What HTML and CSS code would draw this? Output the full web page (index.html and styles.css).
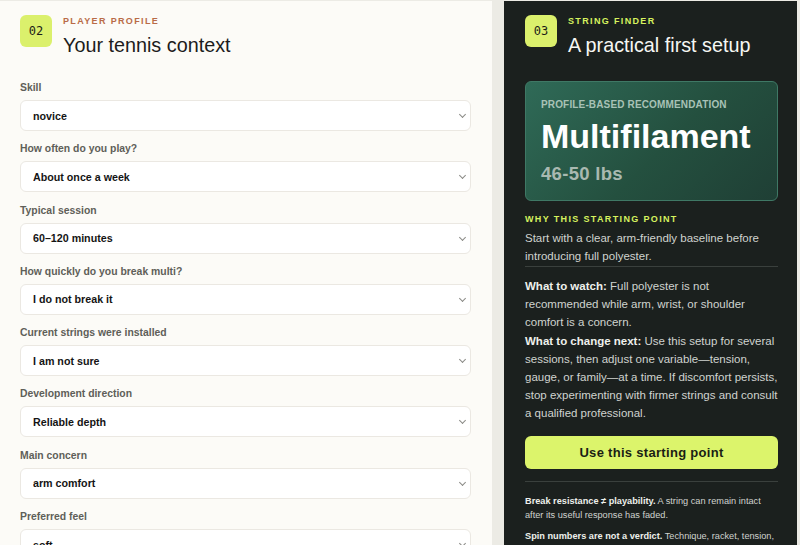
FILE: index.html
```html
<!DOCTYPE html>
<html lang="en">
<head>
    <meta charset="UTF-8">
    <meta name="viewport" content="width=device-width, initial-scale=1.0">
    <title>String Finder</title>
    <link rel="stylesheet" href="styles.css">
</head>
<body>

    <div class="layout">

        <!-- Player profile -->
        <section class="panel profile">
            <div class="step-head">
                <div class="step-num">02</div>
                <div>
                    <p class="eyebrow">Player profile</p>
                    <h2>Your tennis context</h2>
                </div>
            </div>

            <form class="profile-form">
                <div class="field">
                    <label for="skill">Skill</label>
                    <div class="select-wrap">
                        <select id="skill">
                            <option>novice</option>
                            <option>intermediate</option>
                            <option>advanced</option>
                        </select>
                    </div>
                </div>
                <div class="field">
                    <label for="often">How often do you play?</label>
                    <div class="select-wrap">
                        <select id="often">
                            <option>About once a week</option>
                            <option>2–3 times a week</option>
                        </select>
                    </div>
                </div>
                <div class="field">
                    <label for="session">Typical session</label>
                    <div class="select-wrap">
                        <select id="session">
                            <option>60–120 minutes</option>
                        </select>
                    </div>
                </div>
                <div class="field">
                    <label for="break">How quickly do you break multi?</label>
                    <div class="select-wrap">
                        <select id="break">
                            <option>I do not break it</option>
                        </select>
                    </div>
                </div>
                <div class="field">
                    <label for="installed">Current strings were installed</label>
                    <div class="select-wrap">
                        <select id="installed">
                            <option>I am not sure</option>
                        </select>
                    </div>
                </div>
                <div class="field">
                    <label for="direction">Development direction</label>
                    <div class="select-wrap">
                        <select id="direction">
                            <option>Reliable depth</option>
                        </select>
                    </div>
                </div>
                <div class="field">
                    <label for="concern">Main concern</label>
                    <div class="select-wrap">
                        <select id="concern">
                            <option>arm comfort</option>
                        </select>
                    </div>
                </div>
                <div class="field">
                    <label for="feel">Preferred feel</label>
                    <div class="select-wrap">
                        <select id="feel">
                            <option>soft</option>
                        </select>
                    </div>
                </div>
            </form>
        </section>

        <!-- String finder result -->
        <section class="panel finder">
            <div class="step-head">
                <div class="step-num">03</div>
                <div>
                    <p class="eyebrow">String finder</p>
                    <h2>A practical first setup</h2>
                </div>
            </div>

            <div class="rec-card">
                <p class="rec-label">Profile-based recommendation</p>
                <p class="rec-type">Multifilament</p>
                <p class="rec-tension">46-50 lbs</p>
            </div>

            <p class="eyebrow why">Why this starting point</p>
            <p class="why-text">Start with a clear, arm-friendly baseline before introducing full polyester.</p>

            <div class="advice">
                <p><strong>What to watch:</strong> Full polyester is not recommended while arm, wrist, or shoulder comfort is a concern.</p>
                <p><strong>What to change next:</strong> Use this setup for several sessions, then adjust one variable—tension, gauge, or family—at a time. If discomfort persists, stop experimenting with firmer strings and consult a qualified professional.</p>
            </div>

            <button type="button" class="use-btn">Use this starting point</button>

            <div class="notes">
                <p><strong>Break resistance ≠ playability.</strong> A string can remain intact after its useful response has faded.</p>
                <p><strong>Spin numbers are not a verdict.</strong> Technique, racket, tension, and string age all change what you feel.</p>
            </div>
        </section>

    </div>

</body>
</html>
```

FILE: styles.css
```css
/* Basic reset */
* {
    margin: 0;
    padding: 0;
    box-sizing: border-box;
}

body {
    font-family: "Liberation Sans", Arial, sans-serif;
    background-color: #ecebe5;
    overflow: hidden;
}

.layout {
    display: grid;
    grid-template-columns: 492px 293px;
    column-gap: 12px;
    padding-top: 1px;
    align-items: start;
}

.panel {
    min-height: 700px;
    padding-top: 14px;
}

.profile {
    background-color: #fcfbf7;
    padding-left: 20px;
    padding-right: 21px;
}

.finder {
    background-color: #1b201e;
    padding-left: 21px;
    padding-right: 19px;
    color: #d0d3cf;
}

/* Step header */
.step-head {
    display: flex;
    align-items: flex-start;
    gap: 11px;
}

.step-num {
    width: 32px;
    height: 32px;
    flex-shrink: 0;
    border-radius: 6px;
    background-color: #dbf06c;
    color: #1b1d18;
    font-family: "DejaVu Sans Mono", "Liberation Mono", monospace;
    font-size: 12px;
    display: flex;
    align-items: center;
    justify-content: center;
}

.eyebrow {
    font-size: 9px;
    line-height: 12px;
    font-weight: bold;
    letter-spacing: 1.35px;
    text-transform: uppercase;
    color: #b96b47;
}

.finder .eyebrow {
    color: #d6f25f;
}

.step-head h2 {
    margin-top: 6px;
    font-size: 19.8px;
    line-height: 24px;
    font-weight: normal;
    color: #1c1c1c;
}

.finder .step-head h2 {
    color: #f6f7f3;
}

/* Profile form */
.profile-form {
    padding-top: 24px;
}

.field {
    margin-bottom: 11.3px;
}

.field label {
    display: block;
    font-size: 10.4px;
    line-height: 13px;
    font-weight: bold;
    color: #5f5f59;
    margin-bottom: 6px;
}

.select-wrap {
    position: relative;
}

.select-wrap::after {
    content: "";
    position: absolute;
    right: 6px;
    top: 12px;
    width: 4px;
    height: 4px;
    border-right: 1px solid #8a8a86;
    border-bottom: 1px solid #8a8a86;
    transform: rotate(45deg);
    pointer-events: none;
}

.select-wrap select {
    appearance: none;
    -webkit-appearance: none;
    width: 100%;
    height: 31px;
    padding: 0 24px 0 12px;
    font-family: inherit;
    font-size: 10.7px;
    font-weight: bold;
    color: #141414;
    background-color: #ffffff;
    border: 1px solid #ebe8e2;
    border-radius: 6px;
    outline: none;
}

/* Recommendation card */
.rec-card {
    margin-top: 24px;
    height: 120px;
    padding: 17px 15px 0;
    border: 1px solid #3f7865;
    border-radius: 6px;
    background: linear-gradient(135deg, #2f6a57 0%, #24503f 55%, #1f3f35 100%);
}

.rec-label {
    font-size: 10px;
    line-height: 12px;
    font-weight: bold;
    letter-spacing: 0.15px;
    text-transform: uppercase;
    color: #a8c2b6;
}

.rec-type {
    margin-top: 6px;
    font-size: 34px;
    line-height: 38px;
    font-weight: bold;
    color: #ffffff;
}

.rec-tension {
    margin-top: 8px;
    font-size: 18.5px;
    line-height: 22px;
    font-weight: bold;
    letter-spacing: 0.3px;
    color: #a9b9b1;
}

/* Reasoning */
.why {
    margin-top: 12px;
}

.why-text {
    margin-top: 4px;
    padding-bottom: 1px;
    font-size: 11.5px;
    line-height: 18px;
    border-bottom: 1px solid #3a403d;
}

.advice {
    margin-top: 10px;
    font-size: 11.5px;
    line-height: 18.2px;
}

.advice strong,
.notes strong {
    color: #eef0ec;
}

.use-btn {
    display: block;
    width: 100%;
    height: 33px;
    margin-top: 13px;
    border: none;
    border-radius: 6px;
    background-color: #dcf46b;
    color: #1a1e14;
    font-family: inherit;
    font-size: 13px;
    font-weight: bold;
    letter-spacing: 0.3px;
    cursor: pointer;
}

.notes {
    margin-top: 12px;
    padding-top: 12px;
    border-top: 1px solid #3a403d;
    font-size: 9.2px;
    line-height: 14px;
}

.notes p {
    margin-bottom: 7px;
}
```
